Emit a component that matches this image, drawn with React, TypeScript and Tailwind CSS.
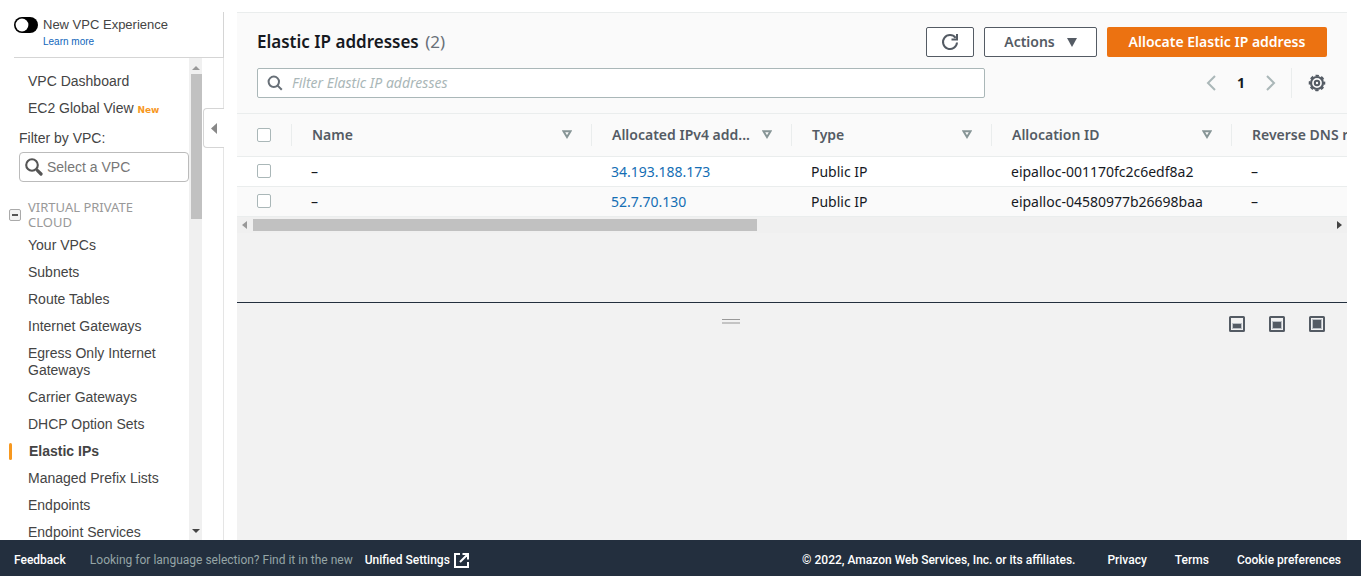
import React from "react";

const navItems = [
  "Your VPCs",
  "Subnets",
  "Route Tables",
  "Internet Gateways",
  "Egress Only Internet Gateways",
  "Carrier Gateways",
  "DHCP Option Sets",
  "Elastic IPs",
  "Managed Prefix Lists",
  "Endpoints",
  "Endpoint Services",
];

const addresses = [
  { ip: "34.193.188.173", type: "Public IP", id: "eipalloc-001170fc2c6edf8a2" },
  { ip: "52.7.70.130", type: "Public IP", id: "eipalloc-04580977b26698baa" },
];

const columns = ["Name", "Allocated IPv4 add...", "Type", "Allocation ID", "Reverse DNS record"];

const tickBox =
  "block size-[14px] appearance-none rounded-xs border border-[#aab7b8] bg-white checked:bg-[#0073bb]";

function SortIcon() {
  return (
    <svg width="10" height="9" viewBox="0 0 10 9" fill="none" stroke="#879596" strokeWidth="2" aria-hidden="true">
      <path d="M1.4 1.2h7.2L5 7z" />
    </svg>
  );
}

function Sidebar() {
  return (
    <aside className="flex w-[224px] shrink-0 flex-col pt-3 font-['Liberation_Sans',Arial,sans-serif] text-sm text-[#444]">
      <div className="ml-3.5 flex h-[46px] shrink-0 border-r border-b border-[#d5d5d5] pt-[5px]">
        <label className="flex items-start gap-[5px] leading-4">
          <input type="checkbox" className="peer sr-only" />
          <svg width="24" height="16" viewBox="0 0 24 16" className="shrink-0" aria-hidden="true">
            <rect width="24" height="16" rx="8" fill="#000" />
            <circle cx="8" cy="8" r="6.4" fill="#fff" />
          </svg>
          <span>
            <span className="block text-[13px] leading-[15px]">New VPC Experience</span>
            <a href="#learn" className="block pt-0.5 text-[10px] text-[#1166bb]">
              Learn more
            </a>
          </span>
        </label>
      </div>
      <div className="flex min-h-0 grow">
        <nav className="w-[189px] shrink-0 overflow-hidden pt-[15px] leading-[17px]">
          <a href="#dashboard" className="ml-7 block">
            VPC Dashboard
          </a>
          <a href="#global" className="mt-2.5 ml-7 block">
            EC2 Global View <b className="font-['DejaVu_Sans',sans-serif] text-[9px] text-[#f7981f]">New</b>
          </a>
          <label htmlFor="vpc" className="mt-[11px] ml-[19px] block">
            Filter by VPC:
          </label>
          <div className="mt-[5px] ml-[19px] flex h-[30px] items-center gap-1 rounded-sm border border-[#bbb] pl-[5px]">
            <svg width="18" height="18" viewBox="0 0 18 18" fill="none" stroke="#555" className="shrink-0" aria-hidden="true">
              <circle cx="7" cy="7" r="5.8" strokeWidth="2.1" />
              <path d="M11.5 11.5l1.5 1.5" strokeWidth="2" />
              <path d="M12.6 12.6l3.4 3.4" strokeWidth="3.2" strokeLinecap="round" />
            </svg>
            <input id="vpc" placeholder="Select a VPC" className="w-full min-w-0 outline-none placeholder:text-[#777]" />
          </div>
          <div className="mt-[18px] flex items-start">
            <button
              aria-label="Collapse section"
              className="mt-[9px] ml-[9px] flex size-3 items-center justify-center rounded-xs border border-[#aaa] bg-[#f2f2f2]"
            >
              <span className="h-0.5 w-1.5 bg-[#555]" />
            </button>
            <h2 className="ml-[7px] w-32 font-['Noto_Sans',sans-serif] text-[13px] leading-[15px] text-[#999]">
              VIRTUAL PRIVATE CLOUD
            </h2>
          </div>
          <ul className="mt-[7px] flex flex-col gap-2.5">
            {navItems.map((item) =>
              item === "Elastic IPs" ? (
                <li key={item} className="ml-[9px] flex">
                  <span className="w-[3px] rounded-xs bg-[#f7981f]" />
                  <a href="#item" className="ml-[17px] font-bold">
                    {item}
                  </a>
                </li>
              ) : (
                <li key={item} className="mr-7 ml-7">
                  <a href="#item" className="block">
                    {item}
                  </a>
                </li>
              ),
            )}
          </ul>
        </nav>
        <div className="flex w-[13px] shrink-0 flex-col items-center bg-[#f0f0f0] pt-2 pb-[7px]">
          <svg width="8" height="4" viewBox="0 0 8 4" fill="#999" aria-hidden="true">
            <path d="M0 4L4 0l4 4z" />
          </svg>
          <div className="mt-1 ml-0.5 h-[145px] w-[11px] bg-[#c1c1c1]" />
          <svg width="8" height="4" viewBox="0 0 8 4" fill="#444" className="mt-auto" aria-hidden="true">
            <path d="M0 0h8L4 4z" />
          </svg>
        </div>
        <div className="flex grow flex-col">
          <div className="h-[50px] border-r border-[#e5e5e5]" />
          <button
            aria-label="Hide navigation"
            className="ml-px flex h-10 items-center justify-center rounded-l-sm border border-r-0 border-[#d5d5d5]"
          >
            <svg width="6" height="11" viewBox="0 0 6 11" fill="#888" aria-hidden="true">
              <path d="M6 0v11L0 5.5z" />
            </svg>
          </button>
          <div className="grow border-r border-[#e5e5e5]" />
        </div>
      </div>
    </aside>
  );
}

function Toolbar() {
  return (
    <header className="border-y border-[#eaeded] bg-[#fafafa] px-5 pt-3.5 pb-[15px]">
      <div className="flex items-center font-semibold text-[#545b64]">
        <h1 className="grow text-[17px] leading-[30px] text-[#16191f]">
          Elastic IP addresses <span className="ml-0.5 font-normal text-[#687078]">(2)</span>
        </h1>
        <button
          aria-label="Refresh"
          className="flex h-[30px] w-12 items-center justify-center rounded-xs border border-[#545b64] bg-white"
        >
          <svg width="18" height="18" viewBox="0 0 18 18" fill="none" stroke="#545b64" strokeWidth="2" aria-hidden="true">
            <path d="M16 9.5A7 7 0 1 1 14.6 4.8" />
            <path d="M16 1v5.500h-5.500" />
          </svg>
        </button>
        <button className="ml-2.5 flex h-[30px] w-[113px] items-center justify-center gap-3 rounded-xs border border-[#545b64] bg-white">
          Actions
          <svg width="10" height="9" viewBox="0 0 10 9" fill="#545b64" aria-hidden="true">
            <path d="M0 0h10L5 9z" />
          </svg>
        </button>
        <button className="ml-2.5 h-[30px] w-[220px] rounded-xs bg-[#ec7211] text-white">Allocate Elastic IP address</button>
      </div>
      <div className="mt-[11px] flex items-center">
        <label className="flex h-[30px] w-[728px] items-center gap-[9px] rounded-xs border border-[#aab7b8] bg-white pl-[9px]">
          <svg width="16" height="16" viewBox="0 0 16 16" fill="none" stroke="#687078" strokeWidth="2" aria-hidden="true">
            <circle cx="6.8" cy="6.8" r="5.2" />
            <path d="M10.6 10.6l4.2 4.2" />
          </svg>
          <input
            aria-label="Filter Elastic IP addresses"
            placeholder="Filter Elastic IP addresses"
            className="grow outline-none placeholder:text-[#aab7b8] placeholder:italic"
          />
        </label>
        <button aria-label="Previous page" className="ml-auto">
          <svg width="10" height="16" viewBox="0 0 10 16" fill="none" stroke="#aab7b8" strokeWidth="2" aria-hidden="true">
            <path d="M9 1L2 8l7 7" />
          </svg>
        </button>
        <button className="w-[50px] font-bold">1</button>
        <button aria-label="Next page">
          <svg width="10" height="16" viewBox="0 0 10 16" fill="none" stroke="#aab7b8" strokeWidth="2" aria-hidden="true">
            <path d="M1 1l7 7-7 7" />
          </svg>
        </button>
        <button
          aria-label="Preferences"
          className="ml-[15px] flex h-[30px] items-center border-l border-[#eaeded] pr-px pl-4"
        >
          <svg width="18" height="18" viewBox="0 0 18 18" fill="none" stroke="#545b64" aria-hidden="true">
            <circle cx="9" cy="9" r="6" strokeWidth="2.2" />
            <circle cx="9" cy="9" r="7.500" strokeWidth="1.6" strokeDasharray="3.4 2.49" strokeDashoffset="1.7" />
            <circle cx="9" cy="9" r="2.2" strokeWidth="2" />
          </svg>
        </button>
      </div>
    </header>
  );
}

function AddressTable() {
  return (
    <div className="overflow-x-auto [scrollbar-width:none]">
      <table className="w-[1294px] table-fixed border-collapse text-left">
        <colgroup>
          <col className="w-[54px]" />
          <col className="w-[300px]" />
          <col className="w-[200px]" />
          <col className="w-[200px]" />
          <col className="w-[240px]" />
          <col className="w-[300px]" />
        </colgroup>
        <thead>
          <tr className="h-[42px] border-b border-[#eaeded] bg-[#fafafa] text-[#545b64]">
            <th className="pl-5">
              <input type="checkbox" aria-label="Select all" className={tickBox} />
            </th>
            {columns.map((name) => (
              <th key={name} className="p-0 font-semibold">
                <div className="flex h-[22px] items-center justify-between border-l border-[#eaeded] pr-[19px] pl-5 whitespace-nowrap">
                  {name}
                  <SortIcon />
                </div>
              </th>
            ))}
          </tr>
        </thead>
        <tbody>
          {addresses.map((row) => (
            <tr key={row.id} className="h-[30px] border-b border-[#eaeded] odd:bg-white even:bg-[#fafafa]">
              <td className="pl-5">
                <input type="checkbox" aria-label={"Select " + row.ip} className={tickBox} />
              </td>
              <td className="pt-0.5 pl-5">–</td>
              <td className="pt-0.5 pl-5">
                <a href="#address" className="text-[#146eb4]">
                  {row.ip}
                </a>
              </td>
              <td className="pt-0.5 pl-5">{row.type}</td>
              <td className="pt-0.5 pl-5">{row.id}</td>
              <td className="pt-0.5 pl-5">–</td>
            </tr>
          ))}
        </tbody>
      </table>
    </div>
  );
}

function PanelIcon({ top, label }: { top: number; label: string }) {
  return (
    <button aria-label={label}>
      <svg width="16" height="16" viewBox="0 0 16 16" aria-hidden="true">
        <rect x="1" y="1" width="14" height="14" rx="0.5" fill="none" stroke="#545b64" strokeWidth="2" />
        <rect x="3" y={top - 1} width="10" height={14 - top} fill="#b9bec4" />
        <rect x="4" y={top} width="8" height={12 - top} fill="#545b64" />
      </svg>
    </button>
  );
}

export default function App() {
  return (
    <div className="flex h-screen flex-col bg-white font-['Noto_Sans',sans-serif] text-sm text-[#16191f]">
      <div className="flex min-h-0 grow">
        <Sidebar />
        <main className="mt-3 mr-3.5 ml-[13px] flex min-w-0 grow flex-col bg-[#f2f2f2]">
          <Toolbar />
          <AddressTable />
          <div className="flex h-4 shrink-0 items-center bg-[#f0f0f0] px-[5px]">
            <svg width="5" height="8" viewBox="0 0 5 8" fill="#999" aria-hidden="true">
              <path d="M5 0v8L0 4z" />
            </svg>
            <div className="ml-1.5 h-3 w-[504px] bg-[#c1c1c1]" />
            <svg width="5" height="8" viewBox="0 0 5 8" fill="#444" className="ml-auto" aria-hidden="true">
              <path d="M0 0v8l5-4z" />
            </svg>
          </div>
          <section className="mt-[69px] flex grow items-start gap-6 border-t border-[#232f3e] px-5 pt-[13px]">
            <div className="mt-[3px] flex h-[5px] grow flex-col items-center justify-between">
              <span className="h-px w-[18px] bg-[#999]" />
              <span className="h-0.5 w-[18px] bg-[#c4c4c4]" />
            </div>
            <div className="flex gap-6 pr-0.5">
              <PanelIcon top={8} label="Small panel" />
              <PanelIcon top={6} label="Medium panel" />
              <PanelIcon top={4} label="Full panel" />
            </div>
          </section>
        </main>
      </div>
      <footer className="flex h-9 shrink-0 items-center bg-[#232f3e] px-3.5 pt-1 font-['Roboto','Noto_Sans',sans-serif] text-xs whitespace-nowrap text-white">
        <button className="font-medium">Feedback</button>
        <span className="ml-6 text-[#95a5a6]">Looking for language selection? Find it in the new</span>
        <a href="#settings" className="ml-3 flex items-center gap-1 font-medium">
          Unified Settings
          <svg width="15" height="15" viewBox="0 0 15 15" fill="none" stroke="#fff" strokeWidth="2" aria-hidden="true">
            <path d="M6 1H1v13h13V9M8.500 1H14v5.500M14 1L6 9" />
          </svg>
        </a>
        <span className="mr-8 ml-auto font-medium">© 2022, Amazon Web Services, Inc. or its affiliates.</span>
        <a href="#privacy" className="mr-7 font-medium">
          Privacy
        </a>
        <a href="#terms" className="mr-7 font-medium">
          Terms
        </a>
        <button className="mr-1.5 font-medium">Cookie preferences</button>
      </footer>
    </div>
  );
}
